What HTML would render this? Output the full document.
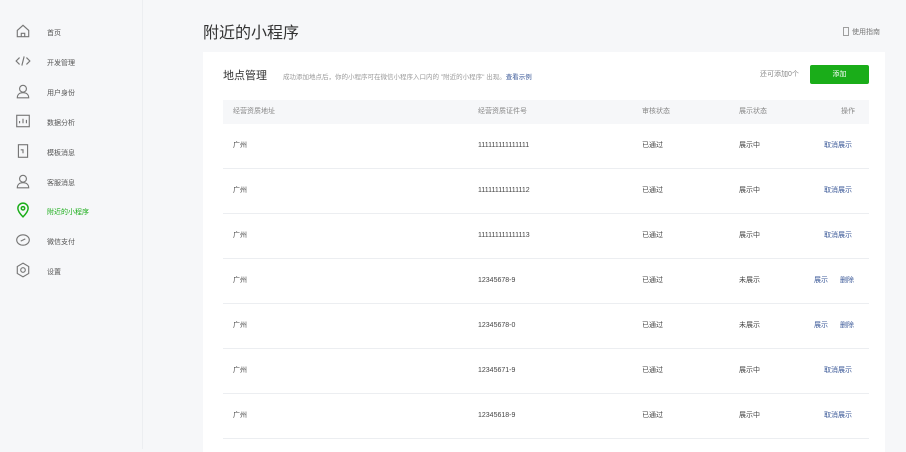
<!DOCTYPE html>
<html><head><meta charset="utf-8"><style>
*{margin:0;padding:0;box-sizing:border-box}
body{width:906px;height:449px;overflow:hidden;background:#f6f7f9;font-family:"Liberation Sans","Noto Sans CJK SC",sans-serif;color:#333;position:relative}
.side{position:absolute;left:0;top:0;width:143px;height:449px;border-right:1px solid #eceef1}
.it{position:absolute;left:0;height:20px;width:143px;font-size:7px;color:#555}
.it svg{position:absolute;left:15px;top:1px}
.it span{position:absolute;left:47px;top:6px}
.title{position:absolute;left:203px;top:19px;font-size:16px;color:#333}
.guide{position:absolute;left:843px;top:27px;font-size:7px;color:#777}
.card{position:absolute;left:203px;top:52px;width:682px;height:400px;background:#fff}
.h{position:absolute;left:20px;top:15px;font-size:11px;color:#333}
.tip{position:absolute;left:80px;top:19px;font-size:6.5px;color:#999}
.tip b{color:#3b5998;font-weight:normal}
.rem{position:absolute;left:557px;top:17px;font-size:7px;color:#888}
.btn{position:absolute;left:607px;top:13px;width:59px;height:19px;background:#1aad19;color:#fff;font-size:7px;text-align:center;line-height:19px;border-radius:2px}
.th{position:absolute;left:20px;top:48px;width:646px;height:24px;background:#f6f7f9;font-size:6.5px;color:#888}
.c{position:absolute;font-size:7px;line-height:10px}
.th .c{top:7px}
.row{position:absolute;left:20px;width:646px;height:45px;border-bottom:1px solid #eceef1;font-size:7px;color:#444}
.row .c{top:17px}
.a{color:#3b5998}
</style></head><body>
<div class="side">
<div class="it" style="top:22px"><svg width="16" height="16" viewBox="0 0 14 14" fill="none" stroke="#777" stroke-width="1"><path d="M2 6.5L7 2l5 4.5V12H2z"/><path d="M5.5 12V9h3v3"/></svg><span>首页</span></div>
<div class="it" style="top:52px"><svg width="16" height="16" viewBox="0 0 14 14" fill="none" stroke="#777" stroke-width="1"><path d="M4 4L1 7l3 3M10 4l3 3-3 3M8 3L6 11"/></svg><span>开发管理</span></div>
<div class="it" style="top:82px"><svg width="16" height="16" viewBox="0 0 14 14" fill="none" stroke="#777" stroke-width="1"><circle cx="7" cy="5" r="3"/><path d="M2 13c0-3 2-4.5 5-4.5s5 1.5 5 4.5z"/></svg><span>用户身份</span></div>
<div class="it" style="top:112px"><svg width="16" height="16" viewBox="0 0 14 14" fill="none" stroke="#777" stroke-width="1"><rect x="1.5" y="2" width="11" height="10"/><path d="M4 9V7M7 9V5M10 9V6"/></svg><span>数据分析</span></div>
<div class="it" style="top:142px"><svg width="16" height="16" viewBox="0 0 14 14" fill="none" stroke="#777" stroke-width="1"><rect x="3" y="1.5" width="8" height="11"/><path d="M5 6h2v3"/></svg><span>模板消息</span></div>
<div class="it" style="top:172px"><svg width="16" height="16" viewBox="0 0 14 14" fill="none" stroke="#777" stroke-width="1"><circle cx="7" cy="5" r="3"/><path d="M2 13c0-3 2-4.5 5-4.5s5 1.5 5 4.5z"/></svg><span>客服消息</span></div>
<div class="it" style="top:201px;color:#1aad19"><svg width="16" height="16" viewBox="0 0 14 14" fill="none" stroke="#1aad19" stroke-width="1.3"><path d="M7 13C4 10 2.5 8 2.5 5.5a4.5 4.5 0 019 0C11.5 8 10 10 7 13z"/><circle cx="7" cy="5.5" r="1.5"/></svg><span>附近的小程序</span></div>
<div class="it" style="top:231px"><svg width="16" height="16" viewBox="0 0 14 14" fill="none" stroke="#777" stroke-width="1"><ellipse cx="7" cy="7" rx="5.5" ry="4.5"/><path d="M5 8l4-2"/></svg><span>微信支付</span></div>
<div class="it" style="top:261px"><svg width="16" height="16" viewBox="0 0 14 14" fill="none" stroke="#777" stroke-width="1"><path d="M7 1l5 3v6l-5 3-5-3V4z"/><circle cx="7" cy="7" r="2"/></svg><span>设置</span></div>
</div>
<div class="title">附近的小程序</div>
<div class="guide"><svg width="6" height="9" style="vertical-align:-2px;margin-right:3px" fill="none" stroke="#888" stroke-width="0.8"><rect x="0.5" y="0.5" width="5" height="8"/></svg>使用指南</div>
<div class="card">
<div class="h">地点管理</div>
<div class="tip">成功添加地点后，你的小程序可在微信小程序入口内的 "附近的小程序" 出现。<b>查看示例</b></div>
<div class="rem">还可添加0个</div>
<div class="btn">添加</div>
<div class="th"><span class="c" style="left:10px">经营资质地址</span><span class="c" style="left:255px">经营资质证件号</span><span class="c" style="left:419px">审核状态</span><span class="c" style="left:516px">展示状态</span><span class="c" style="left:618px">操作</span></div>
<div class="row" style="top:72px"><span class="c" style="left:10px">广州</span><span class="c" style="left:255px">111111111111111</span><span class="c" style="left:419px">已通过</span><span class="c" style="left:516px">展示中</span><span class="c a" style="left:601px">取消展示</span></div>
<div class="row" style="top:117px"><span class="c" style="left:10px">广州</span><span class="c" style="left:255px">111111111111112</span><span class="c" style="left:419px">已通过</span><span class="c" style="left:516px">展示中</span><span class="c a" style="left:601px">取消展示</span></div>
<div class="row" style="top:162px"><span class="c" style="left:10px">广州</span><span class="c" style="left:255px">111111111111113</span><span class="c" style="left:419px">已通过</span><span class="c" style="left:516px">展示中</span><span class="c a" style="left:601px">取消展示</span></div>
<div class="row" style="top:207px"><span class="c" style="left:10px">广州</span><span class="c" style="left:255px">12345678-9</span><span class="c" style="left:419px">已通过</span><span class="c" style="left:516px">未展示</span><span class="c a" style="left:591px">展示</span><span class="c a" style="left:617px">删除</span></div>
<div class="row" style="top:252px"><span class="c" style="left:10px">广州</span><span class="c" style="left:255px">12345678-0</span><span class="c" style="left:419px">已通过</span><span class="c" style="left:516px">未展示</span><span class="c a" style="left:591px">展示</span><span class="c a" style="left:617px">删除</span></div>
<div class="row" style="top:297px"><span class="c" style="left:10px">广州</span><span class="c" style="left:255px">12345671-9</span><span class="c" style="left:419px">已通过</span><span class="c" style="left:516px">展示中</span><span class="c a" style="left:601px">取消展示</span></div>
<div class="row" style="top:342px"><span class="c" style="left:10px">广州</span><span class="c" style="left:255px">12345618-9</span><span class="c" style="left:419px">已通过</span><span class="c" style="left:516px">展示中</span><span class="c a" style="left:601px">取消展示</span></div>
</div>
</body></html>
